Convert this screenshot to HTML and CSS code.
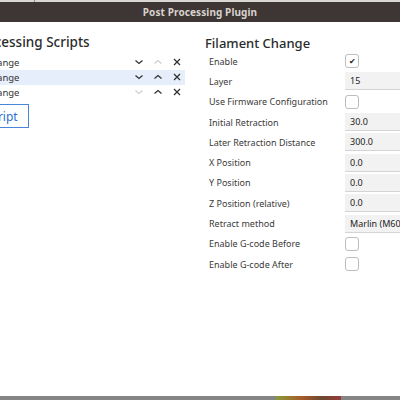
FILE: index.html
```html
<!DOCTYPE html>
<html>
<head>
<meta charset="utf-8">
<link rel="stylesheet" href="styles.css">
</head>
<body>
<div class="screen">
  <div class="topstrip"><span class="tick"></span></div>
  <div class="titlebar">Post Processing Plugin</div>
  <div class="main">
    <div class="left">
      <div class="lhead">Post Processing Scripts</div>
      <div class="list">
        <div class="item">
          <span class="name">Filament Change</span>
          <span class="icons">
            <svg class="ic" viewBox="0 0 10 10"><path d="M1.5 3.5 L5 6.5 L8.5 3.5"/></svg>
            <svg class="ic dis" viewBox="0 0 10 10"><path d="M1.5 6.5 L5 3.5 L8.5 6.5"/></svg>
            <svg class="ic" viewBox="0 0 10 10"><path d="M2 2 L8 8 M8 2 L2 8"/></svg>
          </span>
        </div>
        <div class="item sel">
          <span class="name">Filament Change</span>
          <span class="icons">
            <svg class="ic" viewBox="0 0 10 10"><path d="M1.5 3.5 L5 6.5 L8.5 3.5"/></svg>
            <svg class="ic" viewBox="0 0 10 10"><path d="M1.5 6.5 L5 3.5 L8.5 6.5"/></svg>
            <svg class="ic" viewBox="0 0 10 10"><path d="M2 2 L8 8 M8 2 L2 8"/></svg>
          </span>
        </div>
        <div class="item">
          <span class="name">Filament Change</span>
          <span class="icons">
            <svg class="ic dis" viewBox="0 0 10 10"><path d="M1.5 3.5 L5 6.5 L8.5 3.5"/></svg>
            <svg class="ic" viewBox="0 0 10 10"><path d="M1.5 6.5 L5 3.5 L8.5 6.5"/></svg>
            <svg class="ic" viewBox="0 0 10 10"><path d="M2 2 L8 8 M8 2 L2 8"/></svg>
          </span>
        </div>
      </div>
      <div class="btnrow"><span class="btn">Add a script</span></div>
    </div>
    <div class="right">
      <div class="rhead">Filament Change</div>
      <div class="form">
        <div class="lbl">Enable</div><div class="val"><span class="cb checked">&#10004;</span></div>
        <div class="lbl">Layer</div><div class="val"><span class="inp">15</span></div>
        <div class="lbl">Use Firmware Configuration</div><div class="val"><span class="cb"></span></div>
        <div class="lbl">Initial Retraction</div><div class="val"><span class="inp">30.0</span></div>
        <div class="lbl">Later Retraction Distance</div><div class="val"><span class="inp">300.0</span></div>
        <div class="lbl">X Position</div><div class="val"><span class="inp">0.0</span></div>
        <div class="lbl">Y Position</div><div class="val"><span class="inp">0.0</span></div>
        <div class="lbl">Z Position (relative)</div><div class="val"><span class="inp">0.0</span></div>
        <div class="lbl">Retract method</div><div class="val"><span class="inp">Marlin (M600)</span></div>
        <div class="lbl">Enable G-code Before</div><div class="val"><span class="cb"></span></div>
        <div class="lbl">Enable G-code After</div><div class="val"><span class="cb"></span></div>
      </div>
    </div>
  </div>
  <div class="bottom"><span class="model"></span></div>
</div>
</body>
</html>
```
FILE: styles.css
```css
html, body {
  margin: 0;
  padding: 0;
  background: #ffffff;
}
body {
  font-family: "Noto Sans", "Open Sans", sans-serif;
  color: #333333;
}
.screen {
  width: 400px;
  height: 400px;
  overflow: hidden;
  display: flex;
  flex-direction: column;
}
.topstrip {
  height: 2px;
  background: #d9d6d4;
  display: flex;
}
.tick {
  width: 1px;
  margin-left: 34px;
  background: #8f8a88;
}
.titlebar {
  height: 20px;
  background: #3e3634;
  color: #d8d2ce;
  font-weight: bold;
  font-size: 10px;
  display: flex;
  align-items: center;
  justify-content: center;
  letter-spacing: 0.1px;
}
.main {
  flex: 1;
  display: flex;
  min-height: 0;
}
.left {
  width: 255px;
  margin-left: -70px;
  flex-shrink: 0;
  display: flex;
  flex-direction: column;
}
.lhead {
  font-size: 13.5px;
  font-weight: 500;
  color: #2b2b2b;
  height: 20px;
  line-height: 20px;
  margin-top: 10px;
  padding-left: 11px;
}
.list {
  margin-top: 2.5px;
  display: flex;
  flex-direction: column;
}
.item {
  height: 15px;
  display: flex;
  align-items: center;
  justify-content: space-between;
  padding-left: 14px;
  padding-right: 3px;
  font-size: 9.5px;
  color: #333;
}
.item.sel {
  background: #e7eefb;
}
.icons {
  display: flex;
  gap: 9px;
  align-items: center;
}
.ic {
  width: 10px;
  height: 10px;
  fill: none;
  stroke: #2e2e2e;
  stroke-width: 1.2;
}
.ic.dis {
  stroke: #cfcfcf;
}
.btnrow {
  margin-top: 4.5px;
  display: flex;
}
.btn {
  margin-left: 10px;
  height: 22px;
  padding: 0 10px;
  border: 1px solid #4a86d8;
  color: #2f6fd0;
  font-size: 12px;
  display: flex;
  align-items: center;
}
.right {
  margin-left: 20px;
  flex: 1;
  display: flex;
  flex-direction: column;
}
.rhead {
  font-size: 13px;
  font-weight: 500;
  color: #2b2b2b;
  height: 18px;
  line-height: 18px;
  margin-top: 12px;
}
.form {
  margin-top: -1px;
  margin-left: 4px;
  display: grid;
  grid-template-columns: 136px 1fr;
  grid-auto-rows: 20.3px;
  align-items: center;
}
.lbl {
  font-size: 9px;
  color: #3a3a3a;
  white-space: nowrap;
}
.val {
  display: flex;
  align-items: center;
}
.cb {
  width: 12px;
  height: 12px;
  border: 1px solid #bdbdbd;
  border-radius: 3px;
  background: #fff;
  font-size: 8px;
  line-height: 12px;
  text-align: center;
  color: #222;
}
.inp {
  width: 70px;
  height: 17px;
  background: #f2f2f2;
  border-bottom: 1px solid #d4d4d4;
  font-size: 9px;
  color: #222;
  display: flex;
  align-items: center;
  padding-left: 5px;
  white-space: nowrap;
  overflow: hidden;
}
.bottom {
  height: 4px;
  background: #858585;
  display: flex;
}
.model {
  width: 65px;
  margin-left: 276px;
  background: linear-gradient(90deg, #8a9a3a, #a65a2a 40%, #6b4a30 70%, #9a3a3a);
}
```
